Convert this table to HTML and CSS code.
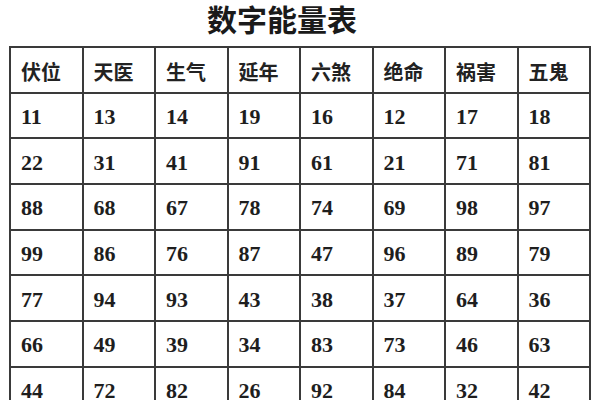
FILE: index.html
```html
<!DOCTYPE html>
<html lang="zh">
<head>
<meta charset="utf-8">
<link rel="stylesheet" href="styles.css">
</head>
<body>
<h1 class="title">数字能量表</h1>
<table class="energy">
<thead>
<tr><th>伏位</th><th>天医</th><th>生气</th><th>延年</th><th>六煞</th><th>绝命</th><th>祸害</th><th>五鬼</th></tr>
</thead>
<tbody>
<tr><td>11</td><td>13</td><td>14</td><td>19</td><td>16</td><td>12</td><td>17</td><td>18</td></tr>
<tr><td>22</td><td>31</td><td>41</td><td>91</td><td>61</td><td>21</td><td>71</td><td>81</td></tr>
<tr><td>88</td><td>68</td><td>67</td><td>78</td><td>74</td><td>69</td><td>98</td><td>97</td></tr>
<tr><td>99</td><td>86</td><td>76</td><td>87</td><td>47</td><td>96</td><td>89</td><td>79</td></tr>
<tr><td>77</td><td>94</td><td>93</td><td>43</td><td>38</td><td>37</td><td>64</td><td>36</td></tr>
<tr><td>66</td><td>49</td><td>39</td><td>34</td><td>83</td><td>73</td><td>46</td><td>63</td></tr>
<tr><td>44</td><td>72</td><td>82</td><td>26</td><td>92</td><td>84</td><td>32</td><td>42</td></tr>
</tbody>
</table>
</body>
</html>
```
FILE: styles.css
```css
html, body {
  margin: 0;
  padding: 0;
  background: #fff;
}
body {
  width: 600px;
  height: 400px;
  overflow: hidden;
  color: #1c1c1c;
}
.title {
  margin: 0;
  height: 46px;
  padding-right: 36px;
  text-align: center;
  font-family: "Noto Sans CJK SC", sans-serif;
  font-weight: 700;
  font-size: 30px;
  line-height: 36px;
  color: #1a1a1a;
}
.energy {
  margin-left: 9px;
  width: 582px;
  table-layout: fixed;
  border-collapse: collapse;
}
.energy th,
.energy td {
  border: 2px solid #3a3a3a;
  height: 45.7px;
  padding: 3px 0 0 10px;
  box-sizing: border-box;
  text-align: left;
  vertical-align: middle;
}
.energy th {
  font-family: "Noto Sans CJK SC", sans-serif;
  font-weight: 700;
  font-size: 20px;
  color: #222;
}
.energy td {
  font-family: "Liberation Serif", serif;
  font-weight: 700;
  font-size: 22px;
  color: #1e1e1e;
}
```
